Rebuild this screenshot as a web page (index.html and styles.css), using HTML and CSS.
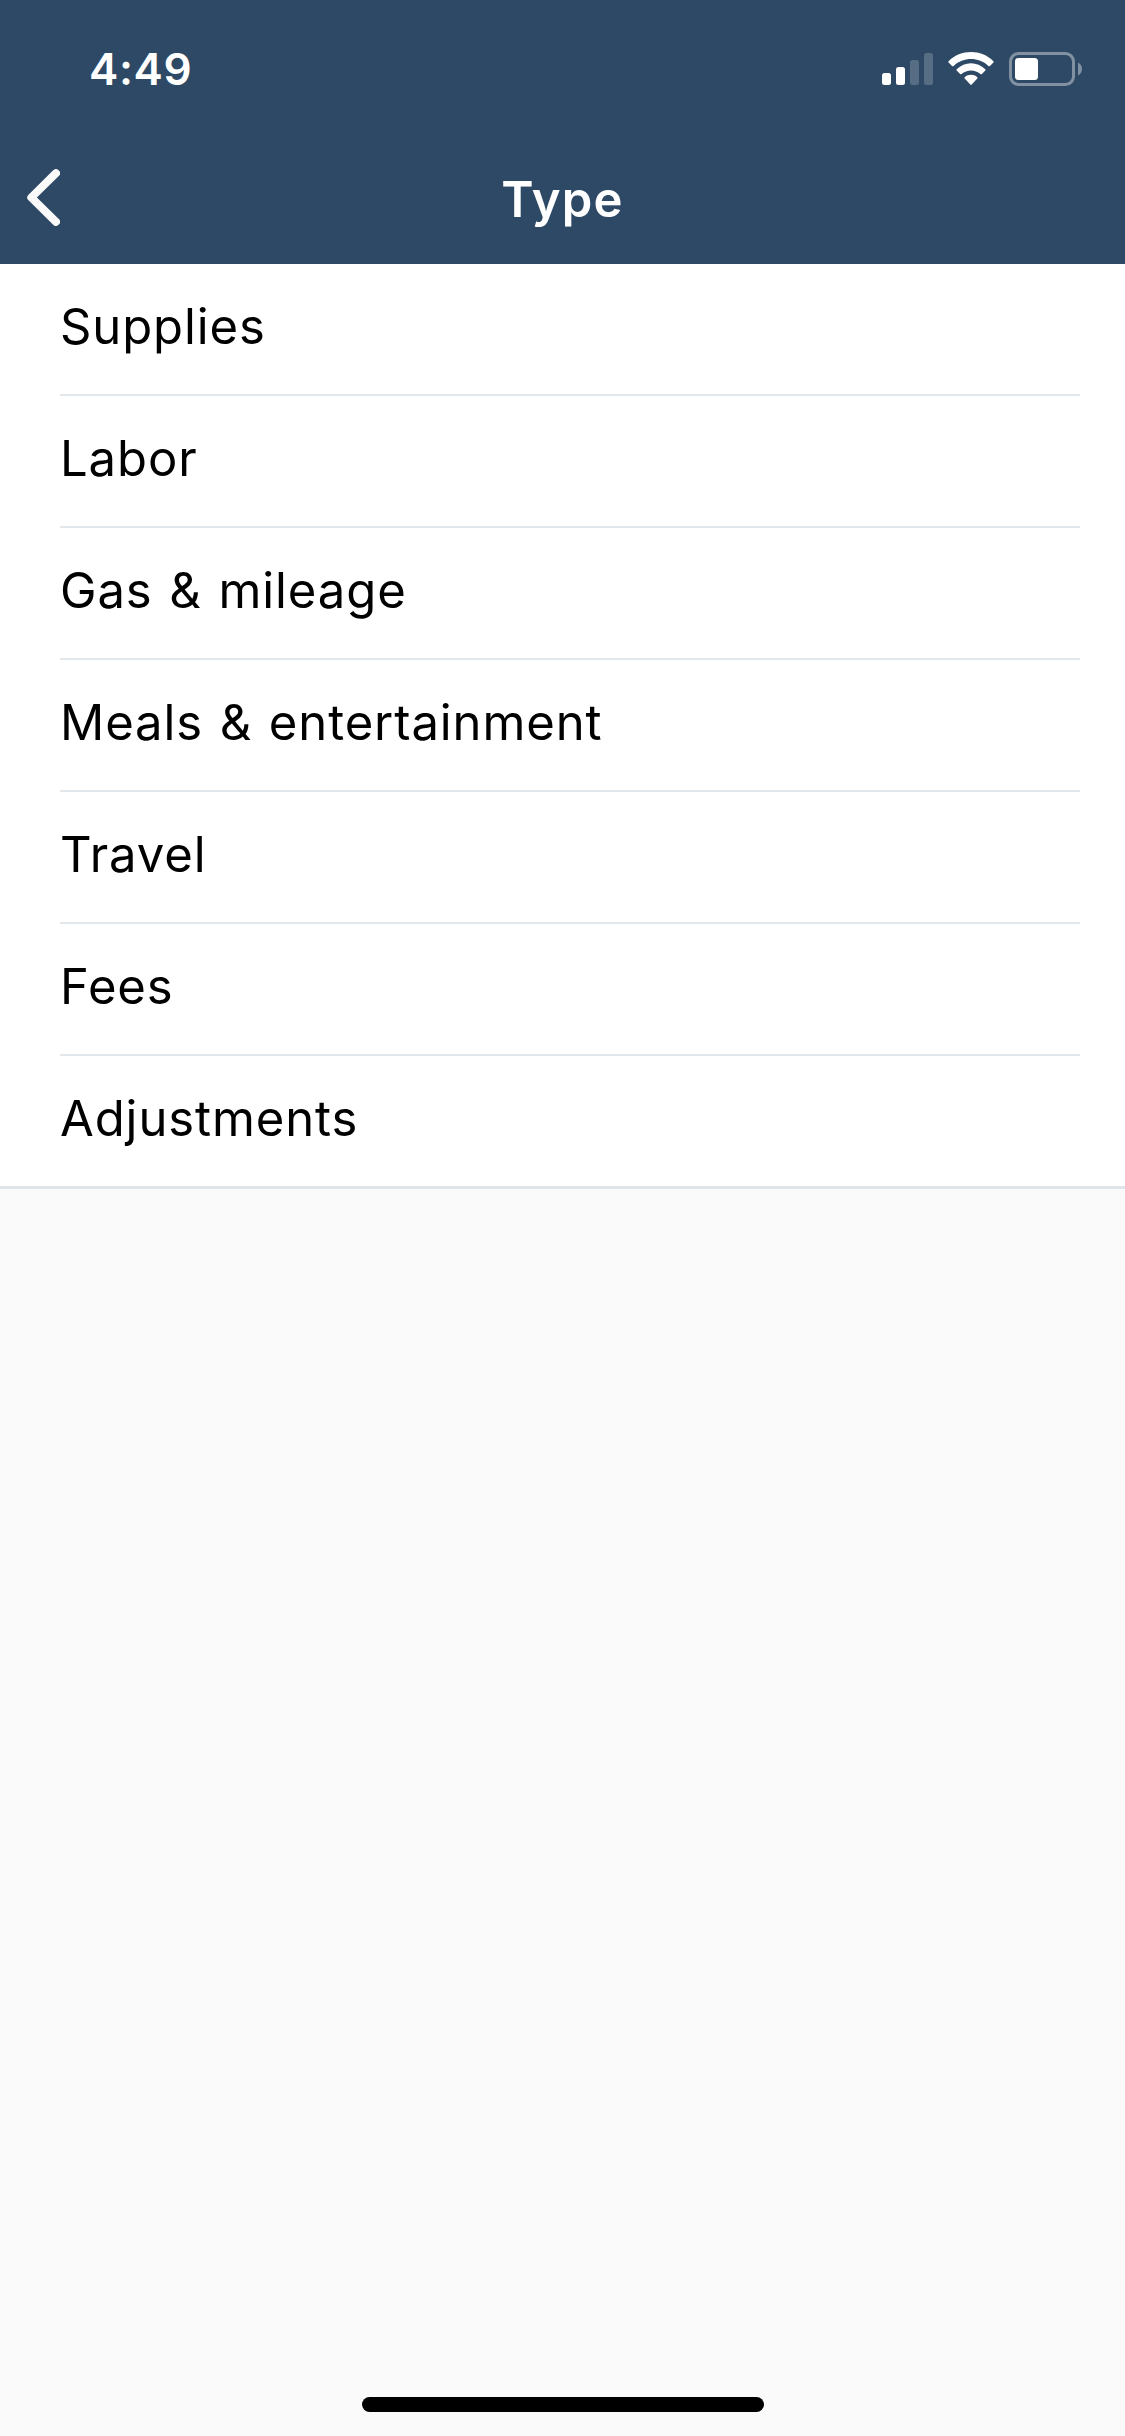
FILE: index.html
```
<!doctype html>
<html lang="en">
  <head>
    <meta charset="UTF-8" />
    <meta name="viewport" content="width=device-width, initial-scale=1" />
    <title>Type</title>
    <link rel="stylesheet" href="styles.css">
  </head>

  <body>
    <header class="header">
      <div class="status-bar">
        <span class="time">4:49</span>
        <div class="status-icons">
          <svg class="signal" width="51" height="34" viewBox="0 0 51 34" fill="#fff">
            <rect x="0" y="21" width="9" height="12" rx="2.5" />
            <rect x="14" y="15" width="9" height="18" rx="2.5" />
            <rect x="28" y="8" width="9" height="25" rx="2.5" opacity="0.2" />
            <rect x="42" y="1" width="9" height="32" rx="2.5" opacity="0.2" />
          </svg>
          <svg class="wifi" width="46" height="34" viewBox="0 0 46 34" fill="#fff">
            <path d="M0.6 9.2 C12.5 -3 33.5 -3 45.4 9.2 Q46 9.9 45.4 10.6 L42 13.9 Q41.2 14.6 40.4 13.9 C30.5 4.8 15.5 4.8 5.6 13.9 Q4.8 14.6 4 13.9 L0.6 10.6 Q0 9.9 0.6 9.2 Z" />
            <path d="M8.7 17.2 C16.7 9.2 29.3 9.2 37.3 17.2 Q38 17.9 37.3 18.6 L33.9 21.9 Q33.2 22.6 32.4 21.9 C27 17.2 19 17.2 13.6 21.9 Q12.8 22.6 12.1 21.9 L8.7 18.6 Q8 17.9 8.7 17.2 Z" />
            <path d="M16.7 25.2 C20.2 22 25.8 22 29.3 25.2 Q30 25.9 29.3 26.6 L23.7 32.6 Q23 33.3 22.3 32.6 L16.7 26.6 Q16 25.9 16.7 25.2 Z" />
          </svg>
          <svg class="battery" width="73" height="34" viewBox="0 0 73 34">
            <rect x="1.5" y="1.5" width="63" height="31" rx="8" fill="none" stroke="#fff" stroke-width="3" opacity="0.4" />
            <rect x="6" y="6" width="23" height="22" rx="3.5" fill="#fff" />
            <path d="M69 10.5 Q73 12.8 73 17 Q73 21.2 69 23.5 Z" fill="#fff" opacity="0.4" />
          </svg>
        </div>
      </div>

      <nav class="nav-bar">
        <a class="back" href="#" aria-label="Back">
          <svg width="33" height="57" viewBox="0 0 33 57" fill="none" stroke="#fafafa" stroke-width="8" stroke-linecap="round" stroke-linejoin="round">
            <path d="M29 4.2 L4.3 28.5 L29 52.8" />
          </svg>
        </a>
        <h1 class="title">Type</h1>
      </nav>
    </header>

    <ul class="type-list">
      <li><span>Supplies</span></li>
      <li><span>Labor</span></li>
      <li><span>Gas &amp; mileage</span></li>
      <li><span>Meals &amp; entertainment</span></li>
      <li><span>Travel</span></li>
      <li><span>Fees</span></li>
      <li><span>Adjustments</span></li>
    </ul>

    <div class="home-indicator"></div>
  </body>
</html>
```

FILE: styles.css
```
* {
  margin: 0;
  padding: 0;
  box-sizing: border-box;
}

body {
  background-color: #fafafa;
  color: #000;
  height: 100vh;
  display: flex;
  flex-direction: column;
  font-family: "Inter", sans-serif;
}

.header {
  background-color: #2e4965;
  color: #fff;
  height: 264px;
}

.status-bar {
  height: 132px;
  padding: 0 43px 0 89px;
  display: flex;
  justify-content: space-between;
}

.time {
  padding-top: 43px;
  font-size: 44px;
  font-weight: 600;
  line-height: 52px;
  letter-spacing: 0.6px;
}

.status-icons {
  display: flex;
  padding-top: 52px;
}

.status-icons svg {
  display: block;
}

.wifi {
  margin-left: 15px;
}

.battery {
  margin-left: 15px;
}

.nav-bar {
  height: 132px;
  padding: 0 27px;
  display: grid;
  grid-template-columns: 33px 1fr 33px;
}

.back {
  padding-top: 37px;
}

.back svg {
  display: block;
}

.title {
  padding-top: 38px;
  text-align: center;
  font-size: 49px;
  font-weight: 600;
  line-height: 60px;
  letter-spacing: 1.2px;
}

.type-list {
  list-style: none;
  background-color: #fff;
  padding-left: 60px;
  border-bottom: 3px solid #dfe5e8;
}

.type-list li {
  height: 132px;
  margin-right: 45px;
  padding-top: 33px;
  border-bottom: 2px solid #e1e7ea;
  font-size: 49px;
  line-height: 60px;
  letter-spacing: 0.9px;
  word-spacing: 2px;
}

.type-list li:last-child {
  height: 130px;
  border-bottom: none;
}

.home-indicator {
  width: 402px;
  height: 15px;
  margin: auto auto 24px;
  border-radius: 8px;
  background-color: #000;
}
```
